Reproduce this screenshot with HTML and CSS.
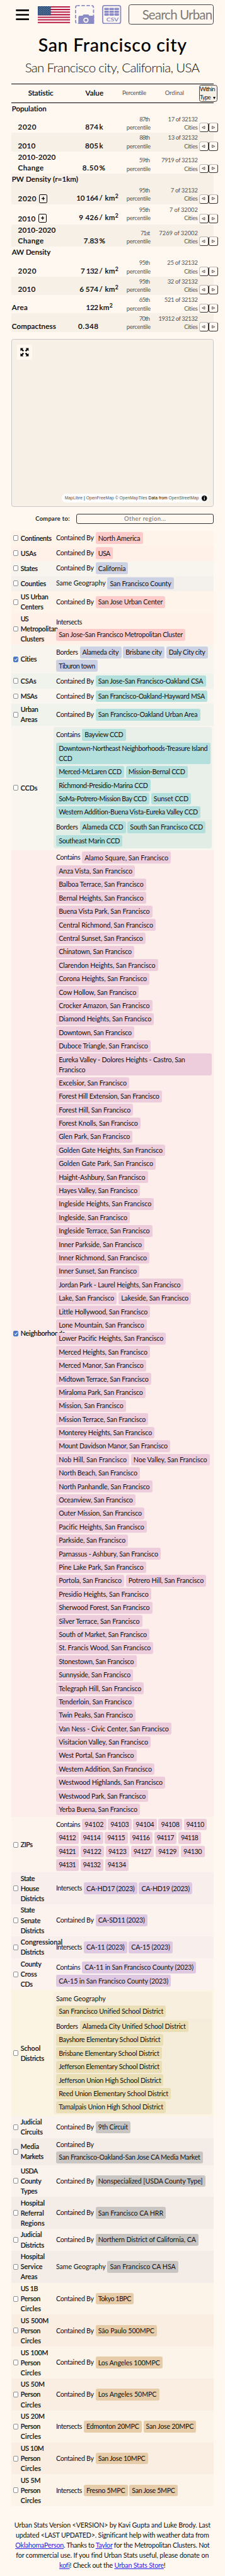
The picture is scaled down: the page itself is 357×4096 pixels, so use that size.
FILE: index.html
```html
<!DOCTYPE html>
<html lang="en">
<head>
<meta charset="utf-8">
<title>San Francisco city, California, USA</title>
<link rel="stylesheet" href="styles.css">
</head>
<body>
<header class="topbar">
  <svg class="burger" viewBox="0 0 24 19"><path d="M1.5 1.5h21M1.5 9.5h21M1.5 17.5h21" stroke="#000" stroke-width="3" stroke-linecap="round"/></svg>
  <svg class="flag" viewBox="0 0 58 30" preserveAspectRatio="none">
    <defs><pattern id="stars" width="4" height="3.2" patternUnits="userSpaceOnUse"><circle cx="1.2" cy="1" r=".6" fill="#fff"/><circle cx="3.2" cy="2.6" r=".6" fill="#fff"/></pattern></defs>
    <rect width="58" height="30" fill="#fff"/>
    <path d="M0 1.15h58M0 5.77h58M0 10.4h58M0 15h58M0 19.6h58M0 24.2h58M0 28.85h58" stroke="#b91c42" stroke-width="2.31"/>
    <rect width="23" height="16" fill="#12396b"/><rect x=".6" y=".6" width="21.8" height="14.8" fill="url(#stars)"/>
  </svg>
  <svg class="tool" viewBox="0 0 34 34">
    <rect x="1" y="1" width="32" height="32" rx="3.5" fill="none" stroke="#8b8bc6" stroke-width="2" stroke-dasharray="6 3" stroke-dashoffset="2"/>
    <path d="M6 22q0-3 2.500-3h5l1.500-2.200h9L25.500 19H34v15H6z" fill="#8b8bc6"/>
    <circle cx="19.500" cy="27" r="3.700" fill="#8b8bc6" stroke="#fff8f0" stroke-width="2"/>
  </svg>
  <svg class="tool csv" viewBox="0 0 34 34">
    <rect x="1" y="1" width="32" height="32" rx="3.500" fill="#fff8f0" stroke="#8b8bc6" stroke-width="2"/>
    <g fill="#8b8bc6"><rect x="4" y="5" width="8" height="4" rx="1"/><rect x="13" y="5" width="8" height="4" rx="1"/><rect x="22" y="5" width="8" height="4" rx="1"/><rect x="4" y="10" width="8" height="4" rx="1"/><rect x="13" y="10" width="8" height="4" rx="1"/><rect x="22" y="10" width="8" height="4" rx="1"/><rect x="4" y="15" width="8" height="4" rx="1"/><rect x="13" y="15" width="8" height="4" rx="1"/><rect x="22" y="15" width="8" height="4" rx="1"/></g>
    <text x="7.500" y="28.700" textLength="22" lengthAdjust="spacingAndGlyphs" class="csv-text">CSV</text>
  </svg>
  <div class="search"><span data-w="125">Search Urban</span></div>
</header>

<h1 class="title"><span data-w="264">San Francisco city</span></h1>
<p class="subtitle"><span data-w="311">San Francisco city, California, USA</span></p>

<section class="stats" id="stats">
  <div class="stats-head">
    <b class="h-stat"><span data-w="45">Statistic</span></b>
    <b class="h-val"><span data-w="32">Value</span></b>
    <span class="h-pct"><span data-w="43">Percentile</span></span>
    <span class="h-ord"><span data-w="34">Ordinal</span></span>
    <div class="scope"><span data-w="27.500">Within</span><div><span data-w="20">Type</span> <i class="caret"></i></div></div>
  </div>
</section>

<section class="map">
  <div class="expand"><svg viewBox="0 0 16 16"><path d="M.5.500h5.500L4.200 2.300 7 5.100 5.100 7 2.300 4.200.500 6zM15.500.500V6l-1.800-1.800L10.900 7 9 5.100l2.800-2.800L10 .500zM.500 15.500V10l1.800 1.800L5.100 9 7 10.900l-2.800 2.800L6 15.500zM15.500 15.500H10l1.800-1.800L9 10.900 10.900 9l2.800 2.800L15.500 10z"/></svg></div>
  <div class="attribution"><span data-w="238.700"><span>MapLibre</span> | <span>OpenFreeMap</span> <span>© OpenMapTiles</span> <b>Data from</b> <span>OpenStreetMap</span></span><svg class="info" viewBox="0 0 14 14"><circle cx="7" cy="7" r="7" fill="#f2f2f2"/><circle cx="7" cy="7" r="4.700"/><path d="M7 4v1.200M7 6.200v3.400" stroke="#fff" stroke-width="1.500"/></svg></div>
</section>

<section class="compare">
  <b><span data-w="61">Compare to:</span></b>
  <div class="compare-input"><span data-w="74">Other region...</span></div>
</section>

<section class="related" id="related"></section>

<footer class="credits">
  <div><span data-w="349">Urban Stats Version &lt;VERSION&gt; by Kavi Gupta and Luke Brody. Last</span></div>
  <div><span data-w="343.700">updated &lt;LAST UPDATED&gt;. Significant help with weather data from</span></div>
  <div><span data-w="345.700"><a>OklahomaPerson</a>. Thanks to <a>Taylor</a> for the Metropolitan Clusters. Not</span></div>
  <div><span data-w="343">for commercial use. If you find Urban Stats useful, please donate on</span></div>
  <div><span data-w="189"><a>kofi</a>! Check out the <a>Urban Stats Store</a>!</span></div>
</footer>
<script src="app.js"></script>
</body>
</html>
```
FILE: styles.css
```css
/* 1rem is ten layout units */
html { font-size: 8.918px; background: #fff8f0; }
* { box-sizing: border-box; }
body {
  margin: 0; width: 40rem; height: 4096px; overflow: hidden;
  padding: 0 2rem; background: #fff8f0; color: #111;
  font-family: Lato, "Open Sans", sans-serif; font-size: 1.2rem; line-height: 1.8rem;
}
span { white-space: nowrap; }
b { font-weight: 500; -webkit-text-stroke: .02rem currentColor; }

.topbar { display: flex; align-items: center; height: 5.2rem; padding-left: .8rem; }
.burger { width: 2.4rem; height: 1.9rem; }
.flag { width: 5.8rem; height: 3rem; margin-left: 1.5rem; }
.tool { width: 3.4rem; height: 3.4rem; margin-left: .9rem; }
.csv { margin-left: 1.4rem; }
.csv-text { font: 700 9px Lato, sans-serif; fill: #8b8bc6; }
.search {
  flex: none; width: 15.1rem; height: 3.6rem; margin-left: 1.3rem; padding-left: 2.3rem;
  border: 1px solid #444; border-radius: .4rem; overflow: hidden;
  font-size: 2.3rem; line-height: 3.4rem; color: #7d7a77;
}
.title { margin: 1rem 0 0; height: 3.6rem; font-size: 3.2rem; line-height: 3.6rem; font-weight: 500; text-align: center; color: #000; -webkit-text-stroke: .01rem #000; }
.subtitle { margin: .4rem 0 0; height: 3.7rem; font-size: 2.3rem; line-height: 3.7rem; font-weight: 300; text-align: center; }

.stats { margin-top: 1rem; height: 44.3rem; }
.stats-head {
  display: flex; align-items: center; height: 3.5rem;
  border-top: 1px solid #000; border-bottom: 1px solid #000; color: #555; font-size: 1.05rem;
}
.stats-head b { color: #000; font-size: 1.3rem; }
.stats-head > * { flex: none; text-align: center; }
.h-stat { width: 10.5rem; }
.h-val { width: 8.6rem; }
.h-pct { width: 5.6rem; }
.h-ord { width: 8.7rem; }
.stats-head .scope {
  width: 3.3rem; height: 3.05rem; border: 1px solid #444; border-radius: .4rem;
  background: #f7f0e6; line-height: 1.45rem; color: #222; padding-left: .03rem; text-align: left;
}
.scope > * { display: block; }
.caret { display: inline-block; margin-left: .1rem; border: .27rem solid transparent; border-top: .55rem solid #000; border-bottom: 0; }

.stat { display: flex; align-items: flex-end; height: 3.3rem; padding-bottom: .1rem; color: #555; font-size: 1.05rem; line-height: 1.51rem; text-align: right; }
.stat.tint { background: #f7f0e6; }
.stat.head { height: 2rem; }
.stat.change { height: 4rem; }
.stat.dense { height: 3.5rem; }
.stat b { font-size: 1.3rem; line-height: 1.92rem; color: #000; }
.s-name { width: 9.5rem; flex: none; padding-left: .1rem; text-align: left; }
.sub .s-name { padding-left: 1.2rem; }
.s-num { width: 6rem; flex: none; }
.s-unit { width: 5rem; flex: none; padding-left: .15rem; text-align: left; }
.dense .s-num, .dense .s-unit { padding-bottom: .2rem; }
.s-unit sup { font-size: .95rem; line-height: 0; vertical-align: .45rem; }
.s-pct { width: 4.2rem; flex: none; padding-bottom: .05rem; }
.s-ord { width: 8.5rem; flex: none; padding-bottom: .05rem; }
.dense .s-pct, .dense .s-ord { padding-bottom: .2rem; }
.dense .pager { margin-bottom: .1rem; }
.pager { display: flex; flex: none; gap: .03rem; margin-left: .2rem; }
.pager i {
  display: flex; align-items: center; justify-content: center; width: 1.67rem; height: 1.67rem;
  border: 1px solid #333; border-top-color: #bbb; border-radius: .4rem; background: #fff8f0;
}
.pager i:first-child { border-left-color: #bbb; }
.pager svg { width: .6rem; height: .6rem; fill: none; stroke: #444; stroke-width: 1; }
.dense .s-name { display: flex; align-items: center; }
.plus { display: flex; flex: none; align-items: center; justify-content: center; width: 1.5rem; height: 1.5rem; margin-left: .5rem; border: 1px solid #000; border-radius: .25rem; }
.plus svg { width: .6rem; height: .6rem; stroke: #000; stroke-width: 1.5; }

.map {
  display: flex; flex-direction: column; justify-content: space-between;
  margin-top: 1.2rem; height: 30rem; padding: .9rem; border: 1px solid #c8c8c8; border-radius: .4rem; background: #f7f0e6;
}
.expand { display: grid; place-items: center; width: 2.7rem; height: 2.7rem; border-radius: .3rem; background: #fff8f0; }
.expand svg { width: 1.55rem; height: 1.55rem; }
.attribution {
  display: flex; align-items: center; align-self: flex-end; height: 1.5rem; margin: 0 -.1rem -.2rem 0; padding: 0 0 0 .5rem;
  border-radius: 1.2rem; background: #fff; color: #000; font: .75rem/1.5rem "Liberation Sans", Arial, sans-serif;
}
.attribution span span { color: #505050; }
.attribution b { font-weight: 400; -webkit-text-stroke: 0; }
.attribution .info { width: 1.4rem; height: 1.4rem; margin-left: .3rem; }

.compare { display: flex; align-items: center; height: 1.8rem; margin-top: 1.2rem; padding-left: 4.3rem; }
.compare b { width: 7.3rem; font-size: 1.05rem; }
.compare-input { flex: 1; height: 1.8rem; border: 1px solid #333; border-radius: .35rem; text-align: center; font-size: 1.05rem; line-height: 1.65rem; color: #6f6c69; }

.related { margin-top: 1.2rem; border-radius: .4rem; overflow: hidden; }
.region { display: flex; }
.kind { display: flex; align-items: center; flex: none; width: 7.5rem; padding: .15rem 0 .15rem .3rem; }
.kind-name { width: 5.7rem; font-size: 1.2rem; }
.kind-name div { height: 1.8rem; }
.box { flex: none; width: 1rem; height: 1rem; margin-right: .37rem; border: 1px solid #8f8f8f; border-radius: .22rem; background: #fff; }
.box.on { border-color: #4f78c6; background: #4f78c6; }
.box svg { display: block; width: 100%; height: 100%; fill: none; stroke: #fff; stroke-width: 1.6; }
.groups { display: flex; flex-direction: column; justify-content: center; flex: 1; }
.nested .groups { margin: .3rem .3rem .3rem 0; border-radius: .4rem; overflow: hidden; }
.group { display: flex; flex-direction: column; gap: .3rem; padding: .3rem 0 .3rem .5rem; }
.line { display: flex; gap: .3rem; }
.rel { flex: none; line-height: 2.1rem; margin-left: -.03rem; }
.rel.solo { line-height: 1.8rem; }
.chip { flex: none; min-height: 2.1rem; padding: .15rem 0 .15rem .45rem; border-radius: .3rem; white-space: nowrap; color: #111; }

.red .chip { background: #fdcbc9; } .blue .chip { background: #ccd2e4; }
.teal .chip { background: #b3dfdc; } .pink .chip { background: #edcddc; }
.purple .chip { background: #dfc8e2; } .yellow .chip { background: #eadeb5; }
.grey .chip { background: #c9c5c2; } .orange .chip { background: #e6cca8; }
.red { background: #fef4ea; } .red.alt { background: #fff0e8; }
.blue { background: #f8f4ee; } .blue.alt { background: #f4f1ed; }
.teal { background: #f9f6ef; } .teal.alt { background: #eff3eb; }
.pink { background: #fdf4ed; } .pink.alt { background: #fdeeeb; }
.purple { background: #fcf3ef; } .purple.alt { background: #f8efed; }
.yellow { background: #fbf4e3; } .yellow .group { background: #f8efdf; } .yellow .group + .group { background: #f5edd9; }
.grey { background: #faf2ed; } .grey.alt { background: #f4ede7; }
.orange { background: #fcf4e8; } .orange.alt { background: #faeee2; }
.teal.nested .group { background: #e9f0e9; } .teal.nested .group + .group { background: #e1ede5; }

.credits { margin-top: 2.4rem; text-align: center; }
.credits div { height: 1.8rem; display: flex; justify-content: center; }
.credits a { color: #2a20e8; text-decoration: underline; }
```
FILE: app.js
```js
const REM = parseFloat(getComputedStyle(document.documentElement).fontSize) / 10;

// kind: s = indented row, h = heading, n = plain; extras: c = change, d = dense
const stats = [
  ['h', 'Population|62', '', '', '', '', ''],
  ['s', '2020|32.5', '874|23.3', 'k|6.3', '87th|19', '17 of 32132|53', ''],
  ['s', '2010|31', '805|23.5', 'k|6.3', '88th|19', '13 of 32132|53', 't'],
  ['sc', '2010-2020|67/Change|45.5', '8.50|28.5', '%|11', '59th|19.5', '7919 of 32132|65', ''],
  ['h', 'PW Density (r=1km)|118', '', '', '', '', 't'],
  ['sd+', '2020|32.5', '10 164|39', '/ km²|34', '95th|19.5', '7 of 32132|48.5', 't'],
  ['sd+', '2010|31', '9 426|34.5', '/ km²|34', '95th|19.5', '7 of 32002|50.5', ''],
  ['sc', '2010-2020|67/Change|45.5', '7.83|26', '%|11', '71st|17', '7269 of 32002|69', 't'],
  ['h', 'AW Density|69', '', '', '', '', ''],
  ['s', '2020|32.5', '7 132|31.5', '/ km²|34', '95th|19.5', '25 of 32132|54.5', ''],
  ['s', '2010|31', '6 574|33.5', '/ km²|34', '95th|19.5', '32 of 32132|54', 't'],
  ['n', 'Area|28', '122|22', 'km²|24', '65th|19.5', '521 of 32132|59.5', ''],
  ['n', 'Compactness|78.5', '0.348|36', '', '70th|19.5', '19312 of 32132|70', 't'],
];

const SF = ', San Francisco';
const hoods = `Anza Vista|140/Balboa Terrace|160/Bernal Heights|160/Buena Vista Park|171/Central Richmond|177/Central Sunset|159/Chinatown|139/Clarendon Heights|181/Corona Heights|166/Cow Hollow|147/Crocker Amazon|171/Diamond Heights|174/Downtown|139/Duboce Triangle|168/Eureka Valley - Dolores Heights - Castro|277/Excelsior|130/Forest Hill Extension|188/Forest Hill|137/Forest Knolls|150/Glen Park|136/Golden Gate Heights|194/Golden Gate Park|177/Haight-Ashbury|163/Hayes Valley|149/Ingleside Heights|174/Ingleside|131/Ingleside Terrace|171/Inner Parkside|157/Inner Richmond|166/Inner Sunset|148/Jordan Park - Laurel Heights|226/Lake|108;Lakeside|129/Little Hollywood|167/Lone Mountain|161/Lower Pacific Heights|195/Merced Heights|167/Merced Manor|160/Midtown Terrace|169/Miraloma Park|159/Mission|124/Mission Terrace|164/Monterey Heights|175/Mount Davidson Manor|203/Nob Hill|130;Noe Valley|140/North Beach|149/North Panhandle|171/Oceanview|141/Outer Mission|157/Pacific Heights|161/Parkside|128/Parnassus - Ashbury|186/Pine Lake Park|160/Portola|121;Potrero Hill|143/Presidio Heights|169/Sherwood Forest|171/Silver Terrace|153/South of Market|166/St. Francis Wood|173/Stonestown|143/Sunnyside|137/Telegraph Hill|156/Tenderloin|139/Twin Peaks|141/Van Ness - Civic Center|205/Visitacion Valley|168/West Portal|143/Western Addition|175/Westwood Highlands|194/Westwood Park|164/Yerba Buena|149`
  .replace(/\|/g, SF + '|').replace('Castro, San Francisco', 'Castro, San~Francisco');

const relWidth = { 'Contained By': 67.5, 'Same Geography': 88.5, Intersects: 46.5, Contains: 43.3, Borders: 39.2 };
// [theme, name lines, groups "relation:line/line", with ";" between chips]
const regions = [
  ['red', 'Continents|55.5', 'Contained By:North America|84'],
  ['red alt', 'USAs|28', 'Contained By:USA|31'],
  ['blue', 'States|30.5', 'Contained By:California|58'],
  ['blue alt', 'Counties|45.5', 'Same Geography:San Francisco County|118'],
  ['red', 'US Urban|49.5/Centers|40.5', 'Contained By:San Jose Urban Center|124'],
  ['red alt', 'US|14.5/Metropolitan|66.5/Clusters|42', 'Intersects:/San Jose-San Francisco Metropolitan Cluster|230'],
  ['blue on', 'Cities|29', 'Borders:Alameda city|74;Brisbane city|74;Daly City city|74/Tiburon town|74'],
  ['teal alt', 'CSAs|28', 'Contained By:San Jose-San Francisco-Oakland CSA|196'],
  ['teal', 'MSAs|30', 'Contained By:San Francisco-Oakland-Hayward MSA|199'],
  ['teal alt', 'Urban|31.5/Areas|30', 'Contained By:San Francisco-Oakland Urban Area|186'],
  ['teal nested', 'CCDs|30', 'Contains:Bayview CCD|78/Downtown-Northeast Neighborhoods-Treasure Island~CCD|274/Merced-McLaren CCD|121;Mission-Bernal CCD|110/Richmond-Presidio-Marina CCD|168/SoMa-Potrero-Mission Bay CCD|166;Sunset CCD|71/Western Addition-Buena Vista-Eureka Valley CCD|257',
    'Borders:Alameda CCD|82;South San Francisco CCD|139/Southeast Marin CCD|118'],
  ['pink alt on', 'Neighborhoods|79', 'Contains:Alamo Square' + SF + '|158/' + hoods],
  ['pink', 'ZIPs|21.5', 'Contains:94102|43;94103|42;94104|42;94108|42;94110|41/94112|40;94114|40.5;94115|41;94116|41;94117|40;94118|40/94121|40;94122|42;94123|42;94127|41;94129|42;94130|42/94131|40;94132|41;94134|42'],
  ['purple alt', 'State|25.5/House|33/Districts|42', 'Intersects:CA-HD17 (2023)|95;CA-HD19 (2023)|95'],
  ['purple', 'State|25.5/Senate|35.5/Districts|42', 'Contained By:CA-SD11 (2023)|92'],
  ['purple alt', 'Congressional|74.5/Districts|42', 'Intersects:CA-11 (2023)|77;CA-15 (2023)|78'],
  ['purple', 'County|37/Cross|29/CDs|21.5', 'Contains:CA-11 in San Francisco County (2023)|203/CA-15 in San Francisco County (2023)|204'],
  ['yellow nested', 'School|35.5/Districts|42', 'Same Geography:/San Francisco Unified School District|195',
    'Borders:Alameda City Unified School District|193/Bayshore Elementary School District|190/Brisbane Elementary School District|188/Jefferson Elementary School District|188/Jefferson Union High School District|191/Reed Union Elementary School District|204/Tamalpais Union High School District|195'],
  ['grey', 'Judicial|38/Circuits|39.5', 'Contained By:9th Circuit|62'],
  ['grey alt', 'Media|33/Markets|41', 'Contained By:/San Francisco-Oakland-San Jose CA Media Market|261'],
  ['grey', 'USDA|31/County|37/Types|30', 'Contained By:Nonspecialized [USDA County Type]|195'],
  ['grey alt', 'Hospital|43/Referral|41.5/Regions|42.5', 'Contained By:San Francisco CA HRR|125'],
  ['grey', 'Judicial|38/Districts|42', 'Contained By:Northern District of California, CA|183'],
  ['grey alt', 'Hospital|43/Service|39/Areas|30', 'Same Geography:San Francisco CA HSA|126'],
  ['orange', 'US 1B|31/Person|35.5/Circles|36', 'Contained By:Tokyo 1BPC|68'],
  ['orange alt', 'US 500M|50/Person|35.5/Circles|36', 'Contained By:São Paulo 500MPC|109'],
  ['orange', 'US 100M|49/Person|35.5/Circles|36', 'Contained By:Los Angeles 100MPC|119'],
  ['orange alt', 'US 50M|43/Person|35.5/Circles|36', 'Contained By:Los Angeles 50MPC|113'],
  ['orange', 'US 20M|43/Person|35.5/Circles|36', 'Intersects:Edmonton 20MPC|103;San Jose 20MPC|94'],
  ['orange alt', 'US 10M|41.5/Person|35.5/Circles|36', 'Contained By:San Jose 10MPC|93'],
  ['orange', 'US 5M|35.5/Person|35.5/Circles|36', 'Intersects:Fresno 5MPC|78;San Jose 5MPC|86'],
];

const fit = (spec) => {
  if (!spec) return '';
  const [text, w] = spec.split('|');
  return `<span data-w="${w}">${text.replace('²', '<sup>2</sup>')}</span>`;
};
const lines = (spec) => spec.split('/').map((s) => `<div>${fit(s)}</div>`).join('');

const arrows = '<div class="pager"><i><svg viewBox="0 0 6 6"><path d="M5.500 .700v4.600L.700 3z"/></svg></i><i><svg viewBox="0 0 6 6"><path d="M.500 .700v4.600L5.300 3z"/></svg></i></div>';
const plus = '<i class="plus"><svg viewBox="0 0 6 6"><path d="M3 0v6M0 3h6"/></svg></i>';

document.getElementById('stats').insertAdjacentHTML('beforeend', stats.map(([k, name, num, unit, pct, ord, tint]) => {
  const cls = ['stat', tint && 'tint', k[0] === 's' && 'sub', k[0] === 'h' && 'head', k.includes('c') && 'change', k.includes('d') && 'dense'].filter(Boolean).join(' ');
  if (k === 'h') return `<div class="${cls}"><b class="s-name">${fit(name)}</b></div>`;
  const label = k.includes('+') ? fit(name) + plus : lines(name);
  // a unit may itself contain a slash, so it is never split into lines
  return `<div class="${cls}"><b class="s-name">${label}</b><b class="s-num">${fit(num)}</b><b class="s-unit">${fit(unit) || '&nbsp;'}</b>
    <div class="s-pct">${lines(pct + '/percentile|43.5')}</div><div class="s-ord">${lines(ord + '/Cities|24.5')}</div>${arrows}</div>`;
}).join(''));

const chip = (spec) => {
  const [text, w] = spec.split('|');
  const [first, rest] = text.split('~');
  const target = rest ? (rest === 'CCD' ? 265 : 225) : w - 9;
  return `<div class="chip" style="width:${w / 10}rem"><span data-w="${target}">${first}</span>${rest ? `<br><span data-w="${rest === 'CCD' ? 24.5 : 47.5}">${rest}</span>` : ''}</div>`;
};
const group = (spec) => {
  const at = spec.indexOf(':');
  const rel = spec.slice(0, at);
  return '<div class="group">' + spec.slice(at + 1).split('/').map((row, i) => {
    const label = i ? '' : `<div class="rel${row ? '' : ' solo'}" style="width:${relWidth[rel] / 10}rem"><span data-w="${relWidth[rel]}">${rel}</span></div>`;
    return `<div class="line">${label}${row ? row.split(';').map(chip).join('') : ''}</div>`;
  }).join('') + '</div>';
};
document.getElementById('related').innerHTML = regions.map(([theme, name, ...groups]) => {
  const on = / on$/.test(theme);
  const box = `<div class="box${on ? ' on' : ''}">${on ? '<svg viewBox="0 0 10 10"><path d="M1.800 5.300l2.200 2.300L8.300 2.200"/></svg>' : ''}</div>`;
  return `<div class="region ${theme}"><div class="kind">${box}<b class="kind-name">${lines(name)}</b></div><div class="groups">${groups.map(group).join('')}</div></div>`;
}).join('');

document.querySelectorAll('[data-w]').forEach((el) => {
  const n = el.textContent.length;
  const range = document.createRange();
  range.selectNodeContents(el);
  const natural = range.getBoundingClientRect().width;
  const gap = (el.dataset.w * REM * 10 / 10 - natural) / Math.max(n - 1, 1);
  el.style.letterSpacing = gap.toFixed(3) + 'px';
  el.style.marginRight = (-gap).toFixed(3) + 'px';
});
```
